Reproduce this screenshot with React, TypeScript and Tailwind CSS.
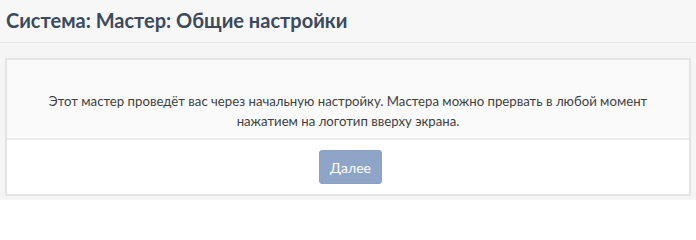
export default function App() {
  return (
    <div className="h-[200px] w-[696px] bg-[#f5f5f5] font-['Lato',sans-serif]">
      <div className="h-[43px] border-b border-[#e6e6e6] bg-[#f7f7f7] px-[6px] pt-[6px]">
        <h1 className="text-[20px] font-bold leading-[28px] text-[#3b4a5d]">
          Система: Мастер: Общие настройки
        </h1>
      </div>
      <div className="px-[5px] pt-[15px]">
        <div className="border-2 border-[#e4e4e4] bg-white">
          <div className="flex h-[80px] items-center justify-center border-b-2 border-[#ececec] bg-[#fafafa] px-[36px] pt-[24px] text-center text-[13.2px] leading-[20px] text-[#3f3f3f]">
            <p>
              Этот мастер проведёт вас через начальную настройку. Мастера можно прервать в любой момент нажатием на логотип вверху экрана.
            </p>
          </div>
          <div className="flex h-[54px] items-center justify-center">
            <button className="ml-[5px] h-[34px] w-[63px] rounded-[3px] border border-[#8aa0c4] bg-[#8fa5c8] text-[14px] text-white">
              Далее
            </button>
          </div>
        </div>
      </div>
    </div>
  );
}
